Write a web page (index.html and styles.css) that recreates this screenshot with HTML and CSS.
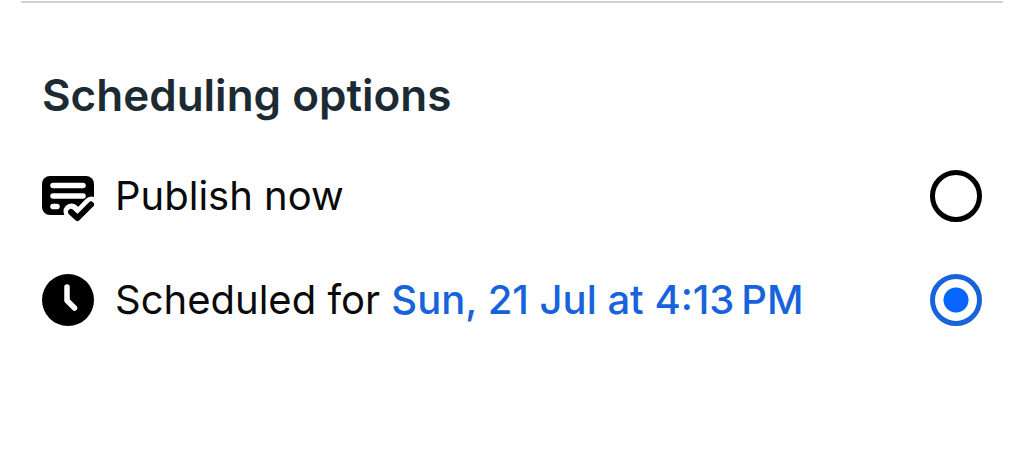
FILE: index.html
```html
<!DOCTYPE html>
<html lang="en">
<head>
<meta charset="utf-8">
<meta name="viewport" content="width=device-width, initial-scale=1">
<title>Scheduling options</title>
<link rel="stylesheet" href="styles.css">
</head>
<body>
<main class="sheet">
  <h1 class="title">Scheduling options</h1>
  <div class="options">
    <div class="option">
      <svg class="icon" viewBox="0 0 52 52" aria-hidden="true">
        <rect x="0" y="6" width="52" height="39" rx="8" fill="#000"/>
        <path d="M11 15.500H41M11 26H41M11 36.500H15" fill="none" stroke="#fff" stroke-width="5.500" stroke-linecap="round"/>
        <path d="M29.500 41.500L36.500 48L49.500 34.500" fill="none" stroke="#fff" stroke-width="16" stroke-linecap="round" stroke-linejoin="round"/>
        <path d="M29 42L35.500 48L49 34.500" fill="none" stroke="#000" stroke-width="6" stroke-linecap="round" stroke-linejoin="round"/>
      </svg>
      <label class="text" for="now">Publish now</label>
      <input class="radio" type="radio" name="when" id="now">
    </div>
    <div class="option">
      <svg class="icon" viewBox="0 0 52 52" aria-hidden="true">
        <circle cx="26" cy="26" r="26" fill="#000"/>
        <path d="M25 13V26.500L32.500 34" fill="none" stroke="#fff" stroke-width="5.500" stroke-linecap="round" stroke-linejoin="round"/>
      </svg>
      <div class="text"><label for="later">Scheduled for</label> <button class="date" type="button">Sun, 21 Jul at 4:13&#8239;PM</button></div>
      <input class="radio" type="radio" name="when" id="later" checked>
    </div>
  </div>
</main>
</body>
</html>
```
FILE: styles.css
```css
* {
  box-sizing: border-box;
}

body {
  margin: 0;
  background: #fff;
  color: #0a0a0a;
  font-family: Inter, "Liberation Sans", sans-serif;
}

.sheet {
  margin: 1px 21px 0;
  padding: 64px 21px;
  border-top: 2px solid #d2d2d2;
}

.title {
  margin: 0 0 47px;
  color: #1c2b33;
  font-size: 44px;
  font-weight: 600;
  line-height: 56px;
}

.options {
  display: grid;
  gap: 52px;
}

.option {
  display: flex;
  align-items: center;
  gap: 21px;
}

.icon {
  flex: none;
  width: 52px;
  height: 52px;
}

.text {
  flex: 1;
  font-size: 40px;
  line-height: 52px;
}

.date {
  padding: 0;
  border: 0;
  background: none;
  color: #1763dc;
  font: inherit;
  font-weight: 500;
  cursor: pointer;
}

.radio {
  appearance: none;
  flex: none;
  width: 52px;
  height: 52px;
  margin: 0;
  border: 5px solid #000;
  border-radius: 50%;
}

.radio:checked {
  border-color: #1763dc;
  background: radial-gradient(circle, #0866ff 12px, transparent 13px);
}
```
